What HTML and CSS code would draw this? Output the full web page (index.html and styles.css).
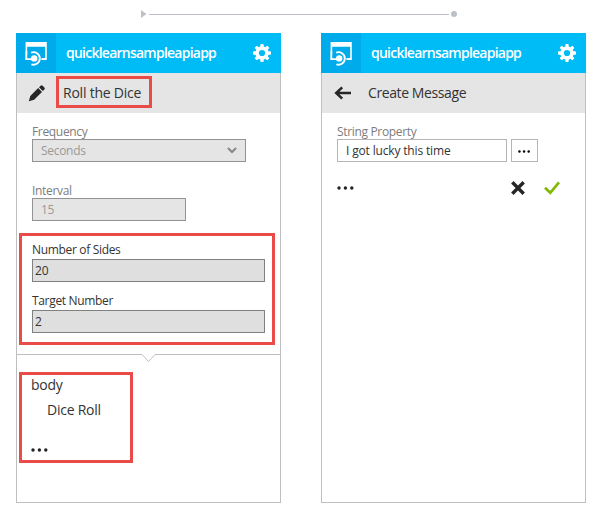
FILE: index.html
```html
<!DOCTYPE html>
<html lang="en">
<head>
<meta charset="utf-8">
<title>quicklearnsampleapiapp</title>
<link rel="stylesheet" href="styles.css">
</head>
<body>
<svg class="symbols" width="0" height="0">
  <symbol id="logo" viewBox="0 0 40 40">
    <path fill="#fff" d="M9.6 9h21.2v18h-5.5v-1.7h3.9v-11.5h-18v11.5h5v1.7h-6.6z"/>
    <circle cx="18.2" cy="25.4" r="7.7" fill="#00abec"/>
    <path fill="#fff" d="M9.6 25.3h8v1.7h-8zM25.4 25.3h4v1.7h-4z"/>
    <circle cx="18.2" cy="25.4" r="3.2" fill="#fff"/>
    <path fill="#fff" d="M9.6 18h1.6v8H9.6z"/>
    <path d="M15.2 19.6a6.3 6.3 0 1 1 .2 11.8" fill="none" stroke="#fff" stroke-width="1.9"/>
  </symbol>
  <symbol id="gear" viewBox="0 0 18 18">
    <g fill="#fff">
      <g id="teeth"><rect x="7.3" y="0" width="3.4" height="18" rx="1"/><rect x="0" y="7.3" width="18" height="3.4" rx="1"/></g>
      <use href="#teeth" transform="rotate(45 9 9)"/>
      <circle cx="9" cy="9" r="6.7"/>
    </g>
    <circle cx="9" cy="9" r="3.1" fill="#00bcf6"/>
  </symbol>
  <symbol id="dots" viewBox="0 0 18 4">
    <circle cx="2" cy="2" r="1.7"/><circle cx="8.4" cy="2" r="1.7"/><circle cx="14.8" cy="2" r="1.7"/>
  </symbol>
</svg>
<div class="connector">
  <svg width="317" height="10" viewBox="0 0 317 10"><path d="M0 1l5.5 4L0 9z" fill="#bcc0c7"/><path d="M8 5.5h300" stroke="#bcc0c7"/><circle cx="313" cy="5" r="3" fill="#bcc0c7"/></svg>
</div>
<main class="cards">
  <section class="card">
    <header class="card-header">
      <svg class="logo"><use href="#logo"/></svg>
      <h1>quicklearnsampleapiapp</h1>
      <svg class="gear"><use href="#gear"/></svg>
    </header>
    <div class="action">
      <svg class="action-icon" viewBox="0 0 18 18"><path fill="#262626" d="M.8 17.2l1.5-5.2 7.9-7.9 3.8 3.8-7.9 7.9zM11 3.3l1.6-1.6q1-.9 2 0l1.8 1.8q.9 1 0 2l-1.6 1.6z"/></svg>
      <h2 class="highlight action-highlight">Roll the Dice</h2>
    </div>
    <div class="fields">
      <div class="field muted"><label>Frequency</label>
        <div class="control select"><span>Seconds</span><svg width="10" height="7" viewBox="0 0 10 7"><path d="M.9 1l4.1 4 4.1-4" fill="none" stroke="#888" stroke-width="2"/></svg></div>
      </div>
      <div class="field muted"><label>Interval</label><div class="control interval">15</div></div>
    </div>
    <div class="highlight inputs">
      <div class="field"><label>Number of Sides</label><div class="control">20</div></div>
      <div class="field"><label>Target Number</label><div class="control">2</div></div>
    </div>
    <div class="divider"><span></span><svg width="15" height="9" viewBox="0 0 15 9"><path d="M0 .5h1l6.5 7 6.5-7h1" fill="none" stroke="#bfbfbf"/></svg><span></span></div>
    <div class="highlight outputs">
      <p>body</p>
      <p class="output-name">Dice Roll</p>
      <svg class="dots"><use href="#dots"/></svg>
    </div>
  </section>
  <section class="card">
    <header class="card-header">
      <svg class="logo"><use href="#logo"/></svg>
      <h1>quicklearnsampleapiapp</h1>
      <svg class="gear"><use href="#gear"/></svg>
    </header>
    <div class="action">
      <svg class="action-icon" viewBox="0 0 18 18"><path d="M18 9H3.5M9.2 3.4L3.2 9l6 5.6" fill="none" stroke="#262626" stroke-width="2.5"/></svg>
      <h2 class="action-title">Create Message</h2>
    </div>
    <div class="fields">
      <div class="field message"><label>String Property</label>
        <div class="message-row"><div class="control white"><span>I got lucky this time</span></div><div class="control more"><svg width="13" height="3"><use href="#dots"/></svg></div></div>
      </div>
      <div class="confirm">
        <svg class="dots"><use href="#dots"/></svg>
        <svg class="cancel" width="14" height="14" viewBox="0 0 14 14"><path d="M1.3 1.3l11.4 11.4M12.7 1.3L1.3 12.7" stroke="#262626" stroke-width="3.4"/></svg>
        <svg width="16" height="14" viewBox="0 0 16 14"><path d="M1 6.8l5.3 5L15 1.3" fill="none" stroke="#7fba00" stroke-width="2.7"/></svg>
      </div>
    </div>
  </section>
</main>
</body>
</html>
```
FILE: styles.css
```css
* { box-sizing: border-box; }
body {
  margin: 0;
  height: 515px;
  background: #fff;
  color: #333;
  font-family: "Open Sans", "Noto Sans", sans-serif;
  font-size: 12px;
}
h1, h2, p { margin: 0; font-weight: 400; }
svg { display: block; flex: none; }
.symbols { position: absolute; }
.connector { height: 33px; padding: 9px 0 0 141px; }
.cards { display: flex; gap: 40px; padding-left: 16px; }
.card {
  width: 265px;
  height: 470px;
  border: 1px solid #bfbfbf;
  border-top: 0;
}
.card-header {
  display: flex;
  align-items: center;
  height: 40px;
  margin: 0 -1px;
  background: #00bcf6;
  color: #fff;
}
.logo { width: 40px; height: 40px; background: #00abec; }
.card-header h1 {
  width: 187px;
  padding-left: 10px;
  font-size: 14px;
  line-height: 20px;
  font-weight: 600;
  letter-spacing: -.76px;
  white-space: nowrap;
}
.gear { width: 18px; height: 18px; margin-left: 10px; }
.action {
  display: flex;
  align-items: center;
  height: 40px;
  background: #e5e5e5;
}
.action-icon { width: 18px; height: 18px; margin: 0 10px 0 11px; }
.action h2 { font-size: 14px; line-height: 26px; white-space: nowrap; }
.highlight { border: 3px solid #e94b46; }
.action .action-highlight { width: 96px; height: 32px; margin: -2px 0 0; padding-left: 4px; line-height: 28px; letter-spacing: -.22px; }
.action-title { margin-left: 7px; letter-spacing: -.4px; }
.fields { padding: 12px 15px 0; }
.field label { display: block; height: 14px; line-height: 14px; white-space: nowrap; letter-spacing: -.33px; }
.control {
  display: flex;
  align-items: center;
  height: 23px;
  padding-left: 2px;
  border: 1px solid #808080;
  background: #dfdfdf;
  white-space: nowrap;
}
.muted { color: #7d7d7d; margin-bottom: 22px; }
.muted .control { border-color: #939393; background: #e5e5e5; color: #999; padding-left: 8px; letter-spacing: -.3px; }
.select { width: 214px; justify-content: space-between; padding-right: 8px; }
.interval { width: 154px; }
.inputs {
  width: 256px;
  height: 112px;
  margin: -10px 0 0 2px;
  padding: 7px 7px 0 10px;
}
.inputs .field { margin-bottom: 12px; }
.inputs label { margin-bottom: 2px; }
.inputs .control { letter-spacing: -.2px; }
.divider { display: flex; height: 9px; margin-top: 9px; }
.divider span { height: 1px; background: #bfbfbf; flex: 0 0 124px; }
.divider span:last-child { flex: 1; }
.outputs { width: 114px; height: 91px; margin: 9px 0 0 2px; padding-left: 9px; font-size: 14px; letter-spacing: -.25px; }
.outputs p { line-height: 20px; }
.outputs .output-name { margin: 5px 0 0 16px; }
.dots { width: 18px; height: 4px; fill: #222; }
.outputs .dots { margin-top: 28px; }
.message { color: #7d7d7d; }
.message-row { display: flex; gap: 4px; }
.message .control { border-color: #b5b5b5; background: #fff; color: #333; }
.white { width: 170px; letter-spacing: -.16px; }
.message .white { padding-left: 8px; }
.message .more { width: 27px; padding: 2px 0 0; justify-content: center; }
.confirm { display: flex; align-items: center; margin-top: 19px; width: 223px; }
.cancel { margin: 0 19px 0 auto; }
```
